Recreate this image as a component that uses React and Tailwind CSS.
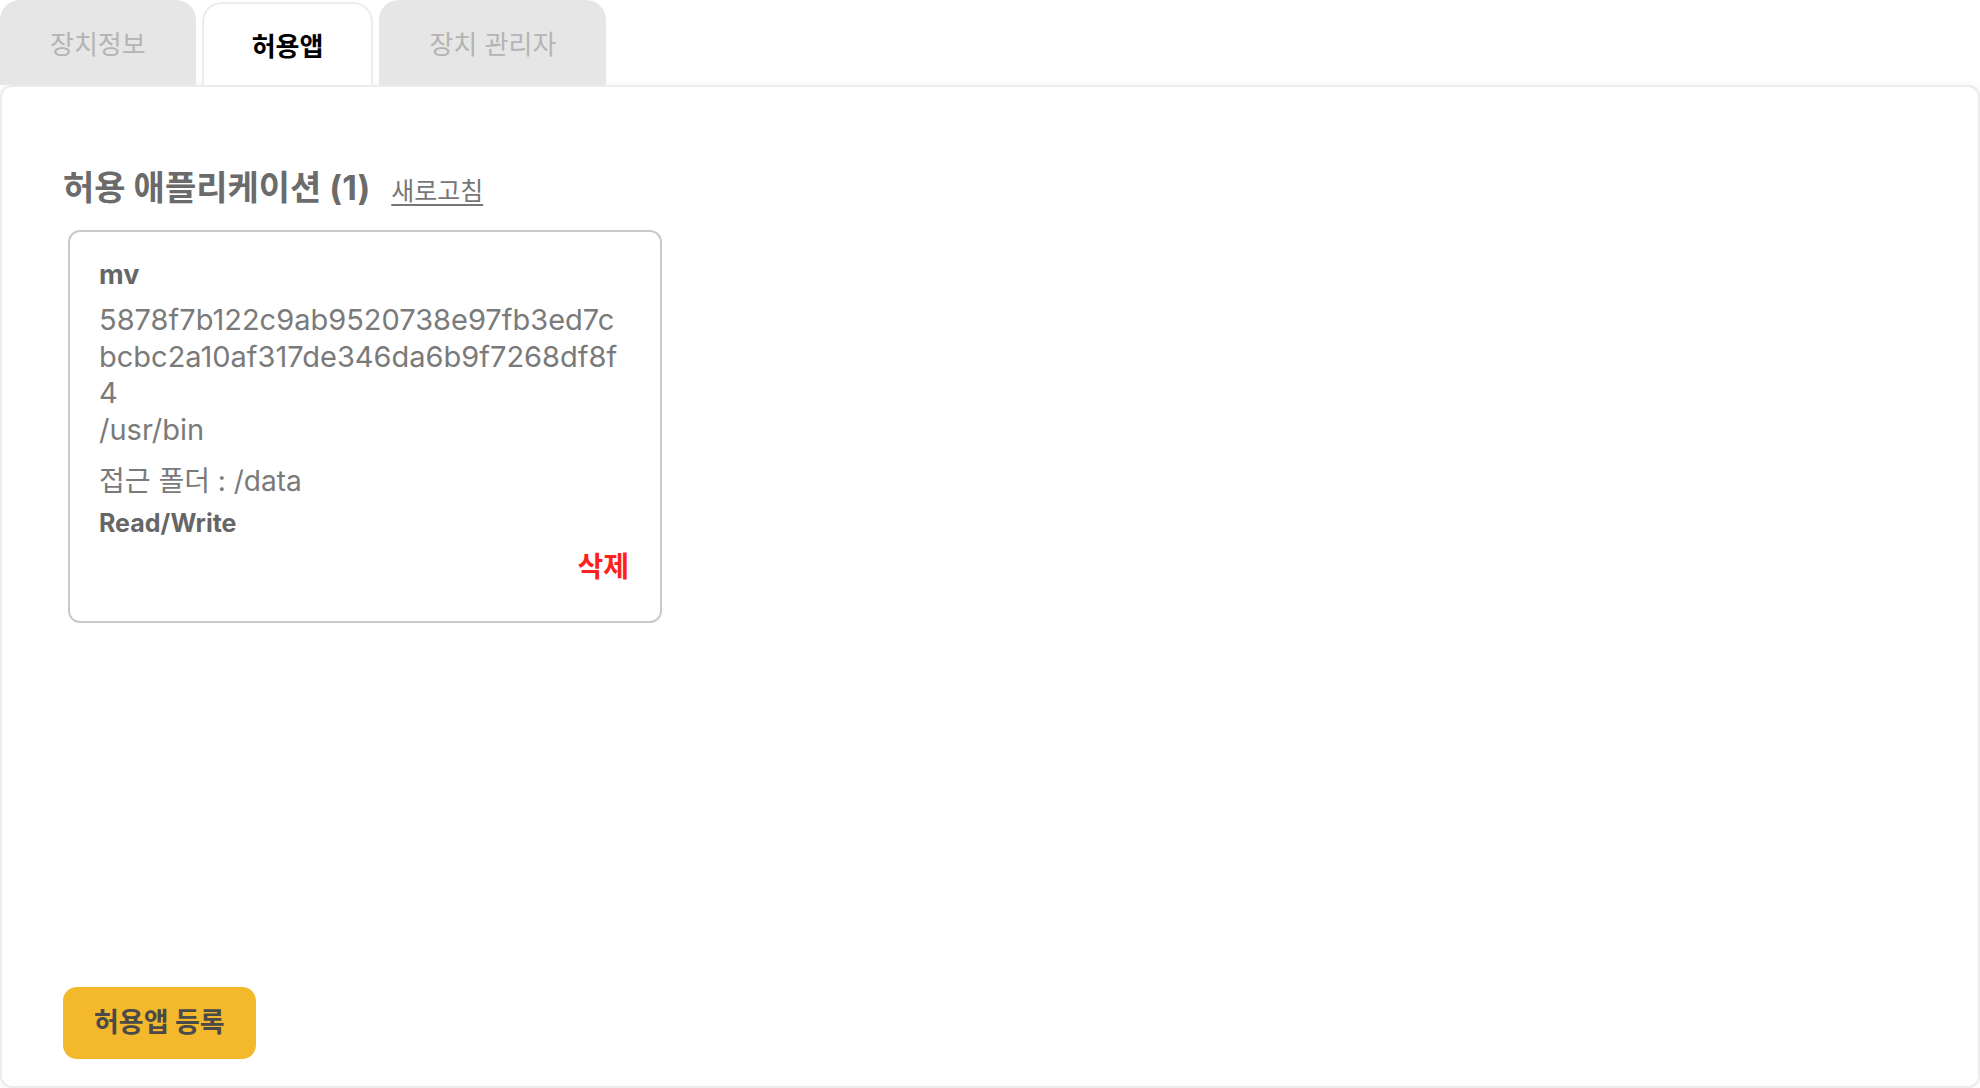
import { useState } from 'react'

const FONT = { fontFamily: 'Inter, "Noto Sans CJK KR", sans-serif' }

// 상단 탭
function Tabs({ tabs, active, onChange }) {
  return (
    <div className="flex items-end h-[85px] gap-[6px]">
      {tabs.map((tab) => {
        const isActive = tab === active
        return (
          <button
            key={tab}
            onClick={() => onChange(tab)}
            className={
              isActive
                ? 'h-[83px] self-end pt-[4px] px-[48px] rounded-t-[20px] bg-white border-2 border-b-0 border-[#ececec] text-[26px] font-bold text-black'
                : 'h-[85px] pt-[4px] px-[50px] rounded-t-[20px] bg-[#e6e6e6] text-[26px] text-[#b4b4b4]'
            }
          >
            {tab}
          </button>
        )
      })}
    </div>
  )
}

// 허용 앱 카드
function AllowedAppCard({ app }) {
  return (
    <div className="ml-[5px] w-[594px] h-[393px] rounded-[12px] border-2 border-[#c9c9c9] pl-[29px] pr-[31px] pt-[26px] flex flex-col">
      <p className="text-[27px] leading-[34px] font-bold text-[#666]">{app.name}</p>
      <p className="mt-[10px] text-[29px] leading-[36.5px] text-[#7a7a7a] break-all">{app.hash}</p>
      <p className="text-[29px] leading-[36.5px] text-[#7a7a7a]">{app.path}</p>
      <p className="mt-[15px] text-[28px] leading-[36px] text-[#7a7a7a]">접근 폴더 : {app.folder}</p>
      <p className="mt-[8px] text-[25px] leading-[32px] font-bold text-[#666]">{app.permission}</p>
      <div className="mt-[10px] flex justify-end">
        <button className="text-[28px] leading-[36px] font-bold text-[#ff1f1f]">삭제</button>
      </div>
    </div>
  )
}

export default function App() {
  const [active, setActive] = useState('허용앱')

  const apps = [
    {
      name: 'mv',
      hash: '5878f7b122c9ab9520738e97fb3ed7cbcbc2a10af317de346da6b9f7268df8f4',
      path: '/usr/bin',
      folder: '/data',
      permission: 'Read/Write',
    },
  ]

  return (
    <div className="w-[1980px] h-[1088px] bg-white overflow-hidden" style={FONT}>
      <Tabs tabs={['장치정보', '허용앱', '장치 관리자']} active={active} onChange={setActive} />

      {/* 본문 패널 */}
      <div className="h-[1003px] rounded-[12px] border-2 border-[#ececec] shadow-[0_0_8px_rgba(0,0,0,0.06)] bg-white px-[61px] pt-[79px] pb-[27px] flex flex-col">
        <div className="flex items-end gap-[21px]">
          <h2 className="text-[34px] leading-[44px] font-bold text-[#6b6b6b]">
            허용 애플리케이션 ({apps.length})
          </h2>
          <button className="mb-[3px] text-[25px] leading-[32px] text-[#777] underline underline-offset-[4px]">
            새로고침
          </button>
        </div>

        <div className="mt-[20px] flex flex-wrap gap-6">
          {apps.map((app) => (
            <AllowedAppCard key={app.name} app={app} />
          ))}
        </div>

        <div className="flex-1" />

        <div>
          <button className="h-[72px] px-[31px] rounded-[14px] bg-[#f4b82c] text-[27px] font-bold text-[#4a4a4a]">
            허용앱 등록
          </button>
        </div>
      </div>
    </div>
  )
}
